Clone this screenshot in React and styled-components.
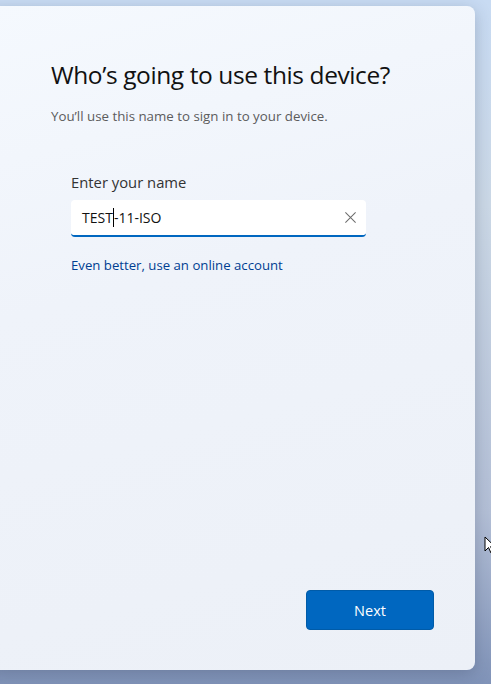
import React from 'react'
import styled, { createGlobalStyle } from 'styled-components'

const Global = createGlobalStyle`
  html, body { margin: 0; padding: 0; }
  body { font-family: "Open Sans", "Noto Sans", sans-serif; }
`

const App = () => {
  return (
    <>
      <Global />
      <Stage>
        <Card>
          <Title>Who’s going to use this device?</Title>
          <Subtitle>You’ll use this name to sign in to your device.</Subtitle>
          <Form>
            <Label>Enter your name</Label>
            <Field>
              <Value>
                TEST<Caret />-11-ISO
              </Value>
              <ClearIcon viewBox="0 0 14 14">
                <path d="M1.5 1.5 L12.5 12.5 M12.5 1.5 L1.5 12.5" stroke="#6b6b6b" strokeWidth="1.1" fill="none" />
              </ClearIcon>
            </Field>
            <Link>Even better, use an online account</Link>
          </Form>
          <Footer>
            <NextButton>Next</NextButton>
          </Footer>
        </Card>
        <Pointer viewBox="0 0 12 18">
          <path d="M1 1 L1 15 L4.5 11.5 L7 17 L9 16 L6.6 10.6 L11 10.6 Z" fill="#fff" stroke="#000" strokeWidth="1" strokeLinejoin="miter" />
        </Pointer>
      </Stage>
    </>
  )
}

export default App

const Stage = styled.div`
  position: relative;
  width: 491px;
  height: 684px;
  overflow: hidden;
  background: linear-gradient(180deg, #c8dbf3 0%, #cbd8e6 30%, #b3bfd6 75%, #8093b8 100%);
  padding-top: 6px;
  box-sizing: border-box;
`

const Card = styled.div`
  margin-left: -12px;
  width: 487px;
  height: 664px;
  box-sizing: border-box;
  border-radius: 8px;
  background: linear-gradient(165deg, #f5f9fe 0%, #eff3fa 40%, #ecf0f7 100%);
  box-shadow: 0 4px 16px rgba(40, 50, 80, 0.25);
  padding: 51px 0 0 63px;
  display: flex;
  flex-direction: column;
`

const Title = styled.h1`
  margin: 0;
  font-size: 24.5px;
  font-weight: 500;
  line-height: 36px;
  color: #111;
  letter-spacing: -0.4px;
`

const Subtitle = styled.p`
  margin: 14px 0 0;
  font-size: 13.3px;
  line-height: 18px;
  color: #5c5c5c;
`

const Form = styled.div`
  margin: 47px 0 0 20px;
  display: flex;
  flex-direction: column;
`

const Label = styled.div`
  font-size: 14.8px;
  line-height: 20px;
  color: #333;
`

const Field = styled.div`
  margin-top: 8px;
  width: 295px;
  height: 37px;
  box-sizing: border-box;
  background: #fff;
  border-radius: 4px;
  border-bottom: 2px solid #0067c0;
  display: flex;
  align-items: center;
  justify-content: space-between;
  padding: 0 9px 0 11px;
`

const Value = styled.span`
  font-size: 14px;
  color: #111;
  display: flex;
  align-items: center;
`

const Caret = styled.span`
  display: inline-block;
  width: 1px;
  height: 19px;
  background: #000;
`

const ClearIcon = styled.svg`
  width: 13px;
  height: 13px;
`

const Link = styled.div`
  margin-top: 18px;
  font-size: 13.2px;
  line-height: 20px;
  color: #003e92;
`

const Footer = styled.div`
  margin-top: auto;
  margin-bottom: 40px;
  display: flex;
  justify-content: flex-end;
  padding-right: 41px;
`

const NextButton = styled.button`
  width: 128px;
  height: 40px;
  border: 1px solid #005ba8;
  border-radius: 4px;
  background: #0067c0;
  color: #fff;
  font-family: "Open Sans", "Noto Sans", sans-serif;
  font-size: 14.5px;
`

const Pointer = styled.svg`
  position: absolute;
  left: 484px;
  top: 536px;
  width: 12px;
  height: 18px;
`
